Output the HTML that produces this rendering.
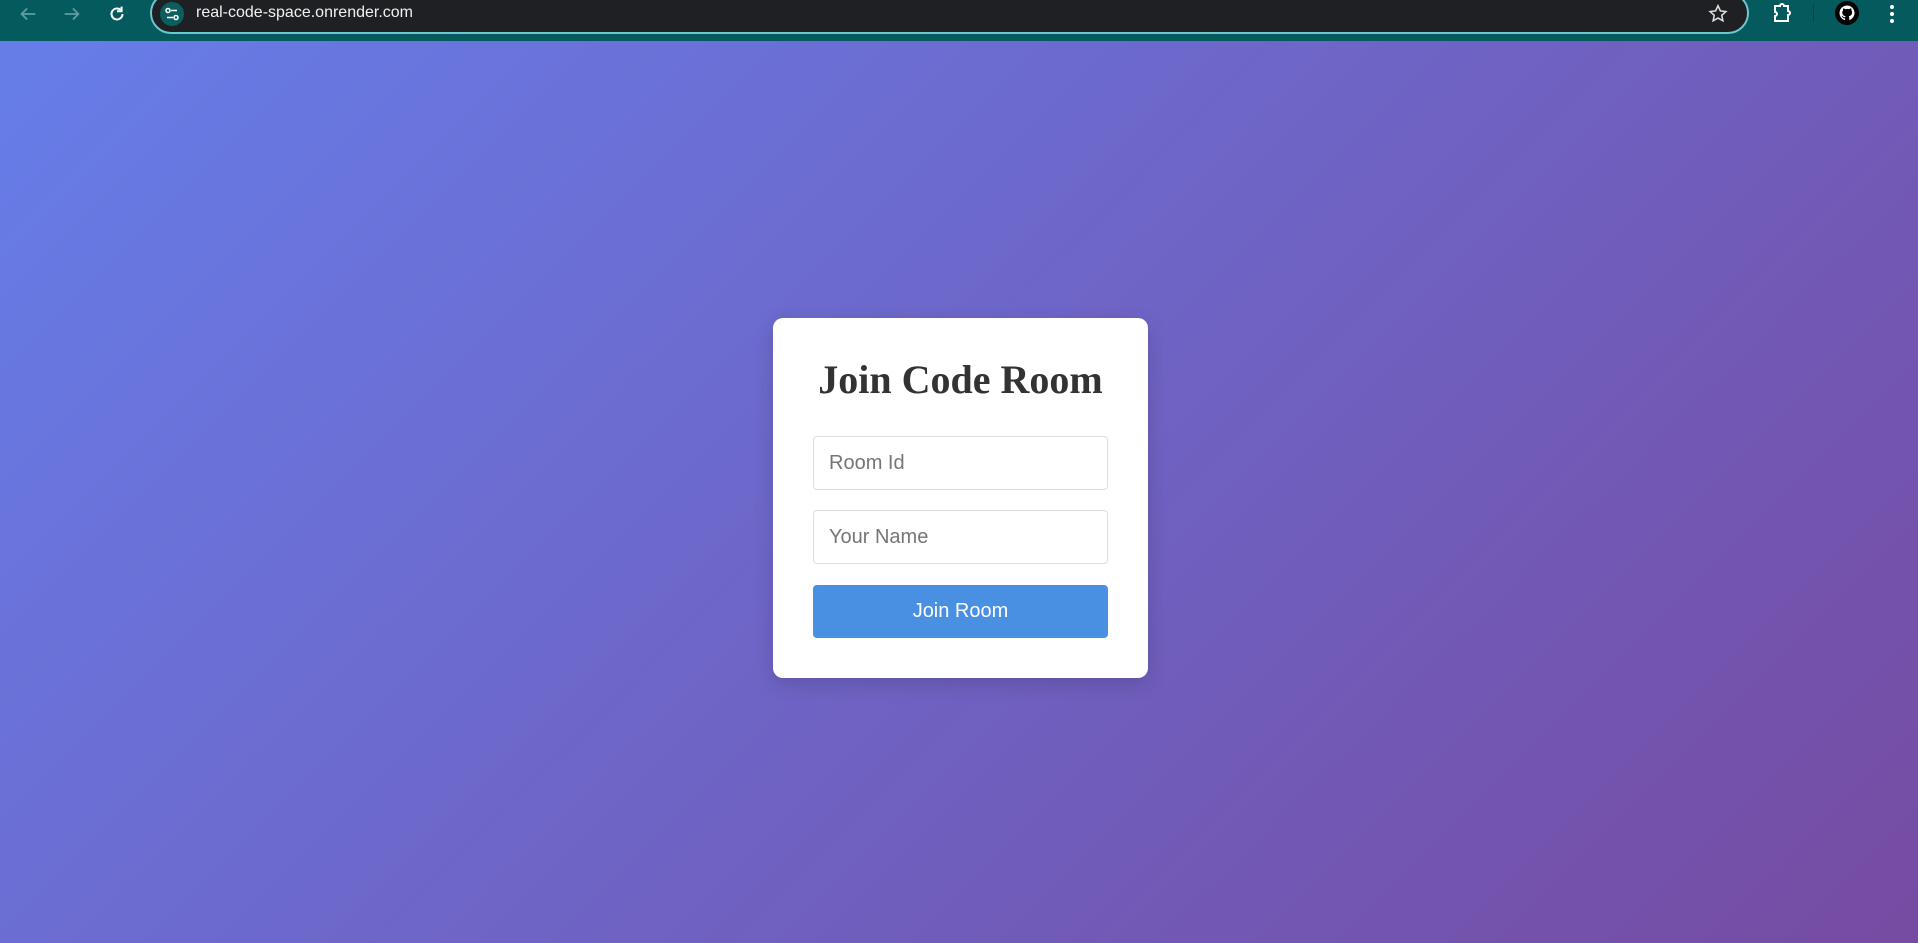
<!DOCTYPE html>
<html><head><meta charset="utf-8"><style>
*{margin:0;padding:0;box-sizing:border-box}
html,body{width:1918px;height:943px;overflow:hidden}
body{background:linear-gradient(135deg,#667eea 0%,#764ba2 100%);font-family:"Liberation Sans",sans-serif;position:relative}
.bar{position:absolute;left:0;top:0;width:1918px;height:41px;background:#045a5c}
.addr{position:absolute;left:150px;top:-8px;width:1599px;height:42px;background:#1f2023;border:2px solid #6cc7cf;border-radius:21px}
.url{position:absolute;left:196px;top:3px;font-size:16px;color:#f1f1f1;line-height:20px}
.ic{position:absolute}
.card{position:absolute;left:773px;top:318px;width:375px;height:360px;background:#fff;border-radius:10px;box-shadow:0 6px 20px rgba(0,0,0,.15)}
h1{position:absolute;left:0;width:375px;top:38px;text-align:center;font-family:"Liberation Serif",serif;font-weight:bold;font-size:40px;color:#333;line-height:1.2}
.in{position:absolute;left:40px;width:295px;height:54px;border:1px solid #ddd;border-radius:4px;font-size:20px;color:#757575;padding-left:15px;line-height:52px}
.btn{position:absolute;left:40px;top:267px;width:295px;height:53px;background:#4a90e2;border-radius:4px;color:#fff;font-size:20px;text-align:center;line-height:53px}
</style></head><body>
<div class="bar"></div>
<svg class="ic" style="left:17px;top:3px" width="22" height="22" viewBox="0 0 24 24"><path d="M20 12H5M11 6l-6 6 6 6" stroke="#5e9ea0" stroke-width="2" fill="none"/></svg>
<svg class="ic" style="left:61px;top:3px" width="22" height="22" viewBox="0 0 24 24"><path d="M4 12h15M13 6l6 6-6 6" stroke="#5e9ea0" stroke-width="2" fill="none"/></svg>
<svg class="ic" style="left:106px;top:3px" width="22" height="22" viewBox="0 0 24 24"><path d="M18 12a6 6 0 1 1-2-4.5" stroke="#fff" stroke-width="2.2" fill="none"/><path d="M17 4v5h-5" stroke="#fff" stroke-width="2.2" fill="none"/></svg>
<div class="addr"></div>
<svg class="ic" style="left:160px;top:2px" width="24" height="24" viewBox="0 0 24 24"><circle cx="12" cy="12" r="12" fill="#0b5e60"/><circle cx="8" cy="8.5" r="2" stroke="#fff" stroke-width="1.5" fill="none"/><path d="M11 8.5h6M7 15.5h6" stroke="#fff" stroke-width="1.5"/><circle cx="16" cy="15.5" r="2" stroke="#fff" stroke-width="1.5" fill="none"/></svg>
<div class="url">real-code-space.onrender.com</div>
<svg class="ic" style="left:1707px;top:3px" width="22" height="22" viewBox="0 0 24 24"><path d="M12 3l2.6 5.6 6 .7-4.5 4.1 1.2 6L12 16.4 6.7 19.4l1.2-6L3.4 9.3l6-.7z" stroke="#ddd" stroke-width="1.7" fill="none"/></svg>
<svg class="ic" style="left:1770px;top:2px" width="24" height="24" viewBox="0 0 24 24"><path d="M5 4h5a2 2 0 0 1 4 0h4v5a2 2 0 0 1 0 4v6H5v-5a2 2 0 0 0 0-4z" stroke="#fff" stroke-width="2" fill="none"/></svg>
<div class="ic" style="left:1813px;top:4px;width:1px;height:18px;background:#1d3b3c"></div>
<svg class="ic" style="left:1835px;top:1px" width="24" height="24" viewBox="0 0 24 24"><circle cx="12" cy="12" r="12" fill="#000"/><path d="M12 4.5a7.5 7.5 0 0 0-2.4 14.6c.4 0 .5-.2.5-.4v-1.4c-2.1.5-2.5-1-2.5-1-.3-.9-.8-1.1-.8-1.1-.7-.5 0-.5 0-.5.8 0 1.2.8 1.2.8.7 1.2 1.8.8 2.2.6.1-.5.3-.8.5-1-1.7-.2-3.4-.8-3.4-3.7 0-.8.3-1.5.8-2-.1-.2-.3-1 .1-2 0 0 .6-.2 2.1.8a7 7 0 0 1 3.8 0c1.4-1 2.1-.8 2.1-.8.4 1 .2 1.8.1 2 .5.5.8 1.2.8 2 0 2.9-1.8 3.5-3.4 3.7.3.2.5.7.5 1.4v2.1c0 .2.1.5.5.4A7.5 7.5 0 0 0 12 4.5z" fill="#fff"/></svg>
<svg class="ic" style="left:1882px;top:2px" width="20" height="24" viewBox="0 0 20 24"><circle cx="10" cy="5" r="2" fill="#fff"/><circle cx="10" cy="12" r="2" fill="#fff"/><circle cx="10" cy="19" r="2" fill="#fff"/></svg>
<div class="card">
<h1>Join Code Room</h1>
<div class="in" style="top:118px">Room Id</div>
<div class="in" style="top:192px">Your Name</div>
<div class="btn">Join Room</div>
</div>
</body></html>
